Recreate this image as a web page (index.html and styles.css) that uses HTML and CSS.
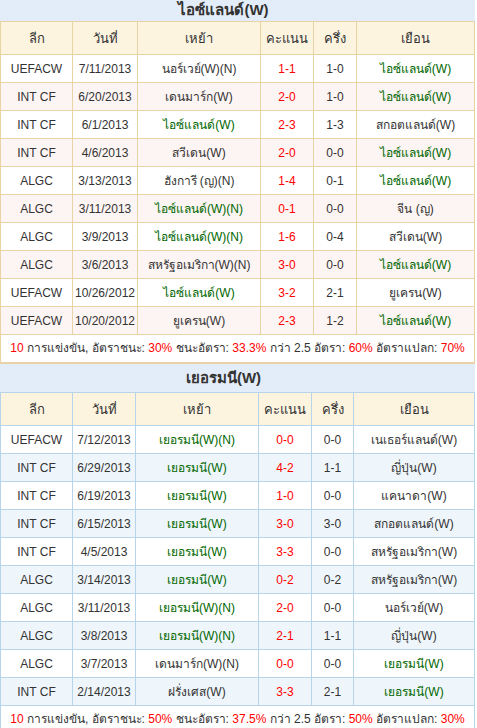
FILE: index.html
```html
<!DOCTYPE html>
<html lang="th">
<head>
<meta charset="utf-8">
<link rel="stylesheet" href="styles.css">
</head>
<body>
<div class="wrap">
  <section class="block tan">
    <div class="title">ไอซ์แลนด์(W)</div>
    <table class="grid">
      <colgroup><col style="width:72px"><col style="width:65px"><col style="width:123px"><col style="width:53px"><col style="width:43px"><col></colgroup>
      <thead><tr><th>ลีก</th><th>วันที่</th><th>เหย้า</th><th>คะแนน</th><th>ครึ่ง</th><th>เยือน</th></tr></thead>
      <tbody>
        <tr><td>UEFACW</td><td>7/11/2013</td><td>นอร์เวย์(W)(N)</td><td class="sc">1-1</td><td>1-0</td><td class="g">ไอซ์แลนด์(W)</td></tr>
        <tr><td>INT CF</td><td>6/20/2013</td><td>เดนมาร์ก(W)</td><td class="sc">2-0</td><td>1-0</td><td class="g">ไอซ์แลนด์(W)</td></tr>
        <tr><td>INT CF</td><td>6/1/2013</td><td class="g">ไอซ์แลนด์(W)</td><td class="sc">2-3</td><td>1-3</td><td>สกอตแลนด์(W)</td></tr>
        <tr><td>INT CF</td><td>4/6/2013</td><td>สวีเดน(W)</td><td class="sc">2-0</td><td>0-0</td><td class="g">ไอซ์แลนด์(W)</td></tr>
        <tr><td>ALGC</td><td>3/13/2013</td><td>ฮังการี (ญ)(N)</td><td class="sc">1-4</td><td>0-1</td><td class="g">ไอซ์แลนด์(W)</td></tr>
        <tr><td>ALGC</td><td>3/11/2013</td><td class="g">ไอซ์แลนด์(W)(N)</td><td class="sc">0-1</td><td>0-0</td><td>จีน (ญ)</td></tr>
        <tr><td>ALGC</td><td>3/9/2013</td><td class="g">ไอซ์แลนด์(W)(N)</td><td class="sc">1-6</td><td>0-4</td><td>สวีเดน(W)</td></tr>
        <tr><td>ALGC</td><td>3/6/2013</td><td>สหรัฐอเมริกา(W)(N)</td><td class="sc">3-0</td><td>0-0</td><td class="g">ไอซ์แลนด์(W)</td></tr>
        <tr><td>UEFACW</td><td>10/26/2012</td><td class="g">ไอซ์แลนด์(W)</td><td class="sc">3-2</td><td>2-1</td><td>ยูเครน(W)</td></tr>
        <tr><td>UEFACW</td><td>10/20/2012</td><td>ยูเครน(W)</td><td class="sc">2-3</td><td>1-2</td><td class="g">ไอซ์แลนด์(W)</td></tr>
      </tbody>
    </table>
    <p class="sum"><span class="r">10</span> การแข่งขัน, อัตราชนะ: <span class="r">30%</span> ชนะอัตรา: <span class="r">33.3%</span> กว่า 2.5 อัตรา: <span class="r">60%</span> อัตราแปลก: <span class="r">70%</span></p>
  </section>
  <section class="block blue">
    <div class="title">เยอรมนี(W)</div>
    <table class="grid">
      <colgroup><col style="width:72px"><col style="width:63px"><col style="width:123px"><col style="width:53px"><col style="width:42px"><col></colgroup>
      <thead><tr><th>ลีก</th><th>วันที่</th><th>เหย้า</th><th>คะแนน</th><th>ครึ่ง</th><th>เยือน</th></tr></thead>
      <tbody>
        <tr><td>UEFACW</td><td>7/12/2013</td><td class="g">เยอรมนี(W)(N)</td><td class="sc">0-0</td><td>0-0</td><td>เนเธอร์แลนด์(W)</td></tr>
        <tr><td>INT CF</td><td>6/29/2013</td><td class="g">เยอรมนี(W)</td><td class="sc">4-2</td><td>1-1</td><td>ญี่ปุ่น(W)</td></tr>
        <tr><td>INT CF</td><td>6/19/2013</td><td class="g">เยอรมนี(W)</td><td class="sc">1-0</td><td>0-0</td><td>แคนาดา(W)</td></tr>
        <tr><td>INT CF</td><td>6/15/2013</td><td class="g">เยอรมนี(W)</td><td class="sc">3-0</td><td>3-0</td><td>สกอตแลนด์(W)</td></tr>
        <tr><td>INT CF</td><td>4/5/2013</td><td class="g">เยอรมนี(W)</td><td class="sc">3-3</td><td>0-0</td><td>สหรัฐอเมริกา(W)</td></tr>
        <tr><td>ALGC</td><td>3/14/2013</td><td class="g">เยอรมนี(W)</td><td class="sc">0-2</td><td>0-2</td><td>สหรัฐอเมริกา(W)</td></tr>
        <tr><td>ALGC</td><td>3/11/2013</td><td class="g">เยอรมนี(W)(N)</td><td class="sc">2-0</td><td>0-0</td><td>นอร์เวย์(W)</td></tr>
        <tr><td>ALGC</td><td>3/8/2013</td><td class="g">เยอรมนี(W)(N)</td><td class="sc">2-1</td><td>1-1</td><td>ญี่ปุ่น(W)</td></tr>
        <tr><td>ALGC</td><td>3/7/2013</td><td>เดนมาร์ก(W)(N)</td><td class="sc">0-0</td><td>0-0</td><td class="g">เยอรมนี(W)</td></tr>
        <tr><td>INT CF</td><td>2/14/2013</td><td>ฝรั่งเศส(W)</td><td class="sc">3-3</td><td>2-1</td><td class="g">เยอรมนี(W)</td></tr>
      </tbody>
    </table>
    <p class="sum"><span class="r">10</span> การแข่งขัน, อัตราชนะ: <span class="r">50%</span> ชนะอัตรา: <span class="r">37.5%</span> กว่า 2.5 อัตรา: <span class="r">50%</span> อัตราแปลก: <span class="r">30%</span></p>
  </section>
</div>
</body>
</html>
```
FILE: styles.css
```css
html, body {
  margin: 0;
  padding: 0;
  background: #ffffff;
}
body {
  font-family: "Liberation Sans", Arial, sans-serif;
  font-size: 12px;
  color: #333333;
}
.wrap {
  width: 475px;
}
.block {
  margin: 0;
}
.title {
  height: 28px;
  line-height: 28px;
  background: #e3edf9;
  text-align: center;
  font-weight: bold;
  font-size: 15px;
  color: #333333;
  padding-right: 28px;
}
.tan .title {
  height: 21px;
  line-height: 20px;
}
.grid {
  width: 475px;
  border-collapse: collapse;
  table-layout: fixed;
}
.grid th,
.grid td {
  text-align: center;
  padding: 0;
  white-space: nowrap;
  overflow: hidden;
}
.grid th {
  height: 32px;
  background: #fdf4e0;
  font-weight: normal;
  font-size: 13px;
  color: #333333;
}
.grid td {
  height: 27px;
}
.tan .grid th,
.tan .grid td {
  border: 1px solid #e8d3a5;
}
.blue .grid th,
.blue .grid td {
  border: 1px solid #b8d4e9;
}
.tan .grid tbody tr:nth-child(even) td {
  background: #fdf5f3;
}
.blue .grid tbody tr:nth-child(even) td {
  background: #eff6fb;
}
.sc {
  color: #ff0000;
}
.g {
  color: #006600;
}
.r {
  color: #ff0000;
}
.sum {
  margin: 0;
  line-height: 27px;
  text-align: center;
  font-size: 12px;
  color: #333333;
  box-sizing: border-box;
  height: 29px;
}
.tan .sum {
  border-left: 1px solid #e8d3a5;
  border-right: 1px solid #e8d3a5;
  border-bottom: 2px solid #e8d3a5;
}
.blue .sum {
  border-left: 1px solid #b8d4e9;
  border-right: 1px solid #b8d4e9;
  border-bottom: 2px solid #b8d4e9;
}
```
